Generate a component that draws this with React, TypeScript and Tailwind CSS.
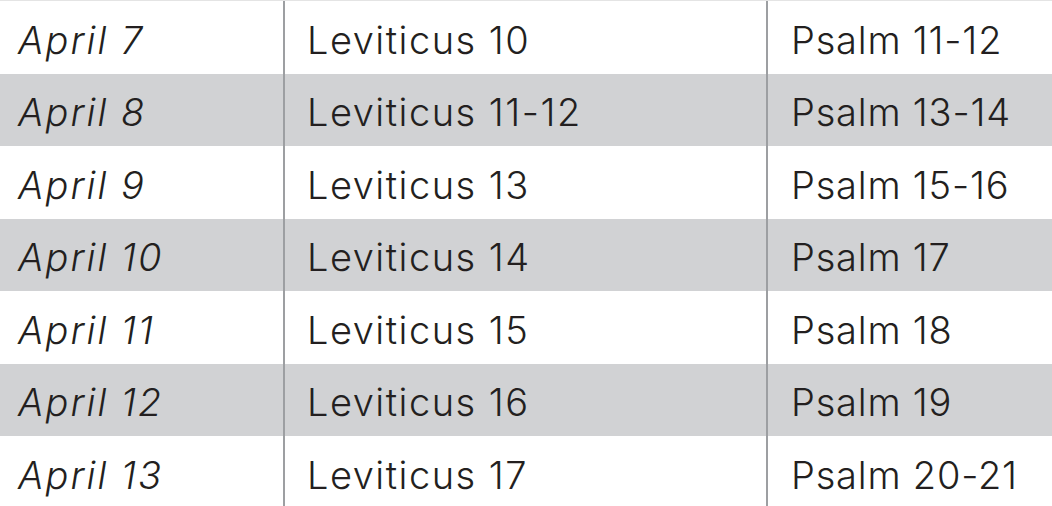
const rows = [
    { date: "April 7", ot: "Leviticus 10", ps: "Psalm 11-12" },
    { date: "April 8", ot: "Leviticus 11-12", ps: "Psalm 13-14" },
    { date: "April 9", ot: "Leviticus 13", ps: "Psalm 15-16" },
    { date: "April 10", ot: "Leviticus 14", ps: "Psalm 17" },
    { date: "April 11", ot: "Leviticus 15", ps: "Psalm 18" },
    { date: "April 12", ot: "Leviticus 16", ps: "Psalm 19" },
    { date: "April 13", ot: "Leviticus 17", ps: "Psalm 20-21" },
];

export default function App() {
    return (
        <div className="w-[1052px] h-[506px] overflow-hidden bg-white border-t border-[#e4e4e4] text-[#231f20] font-['Inter','Noto_Sans',sans-serif]">
            {rows.map((r, i) => (
                <div
                    key={r.date}
                    className={`grid grid-cols-[283px_2px_481px_2px_1fr] h-[72.5px] ${i % 2 === 1 ? 'bg-[#d1d2d4]' : 'bg-white'}`}
                >
                    <div className="flex items-center pl-[18px] pt-[6px] text-[38px] italic font-light tracking-[2px]">{r.date}</div>
                    <div className="bg-[#9d9fa2]" />
                    <div className="flex items-center pl-[22px] pt-[6px] text-[38px] font-light tracking-[1.5px]">{r.ot}</div>
                    <div className="bg-[#9d9fa2]" />
                    <div className="flex items-center pl-[23px] pt-[6px] text-[38px] font-light tracking-[0.8px]">{r.ps}</div>
                </div>
            ))}
        </div>
    );
}
